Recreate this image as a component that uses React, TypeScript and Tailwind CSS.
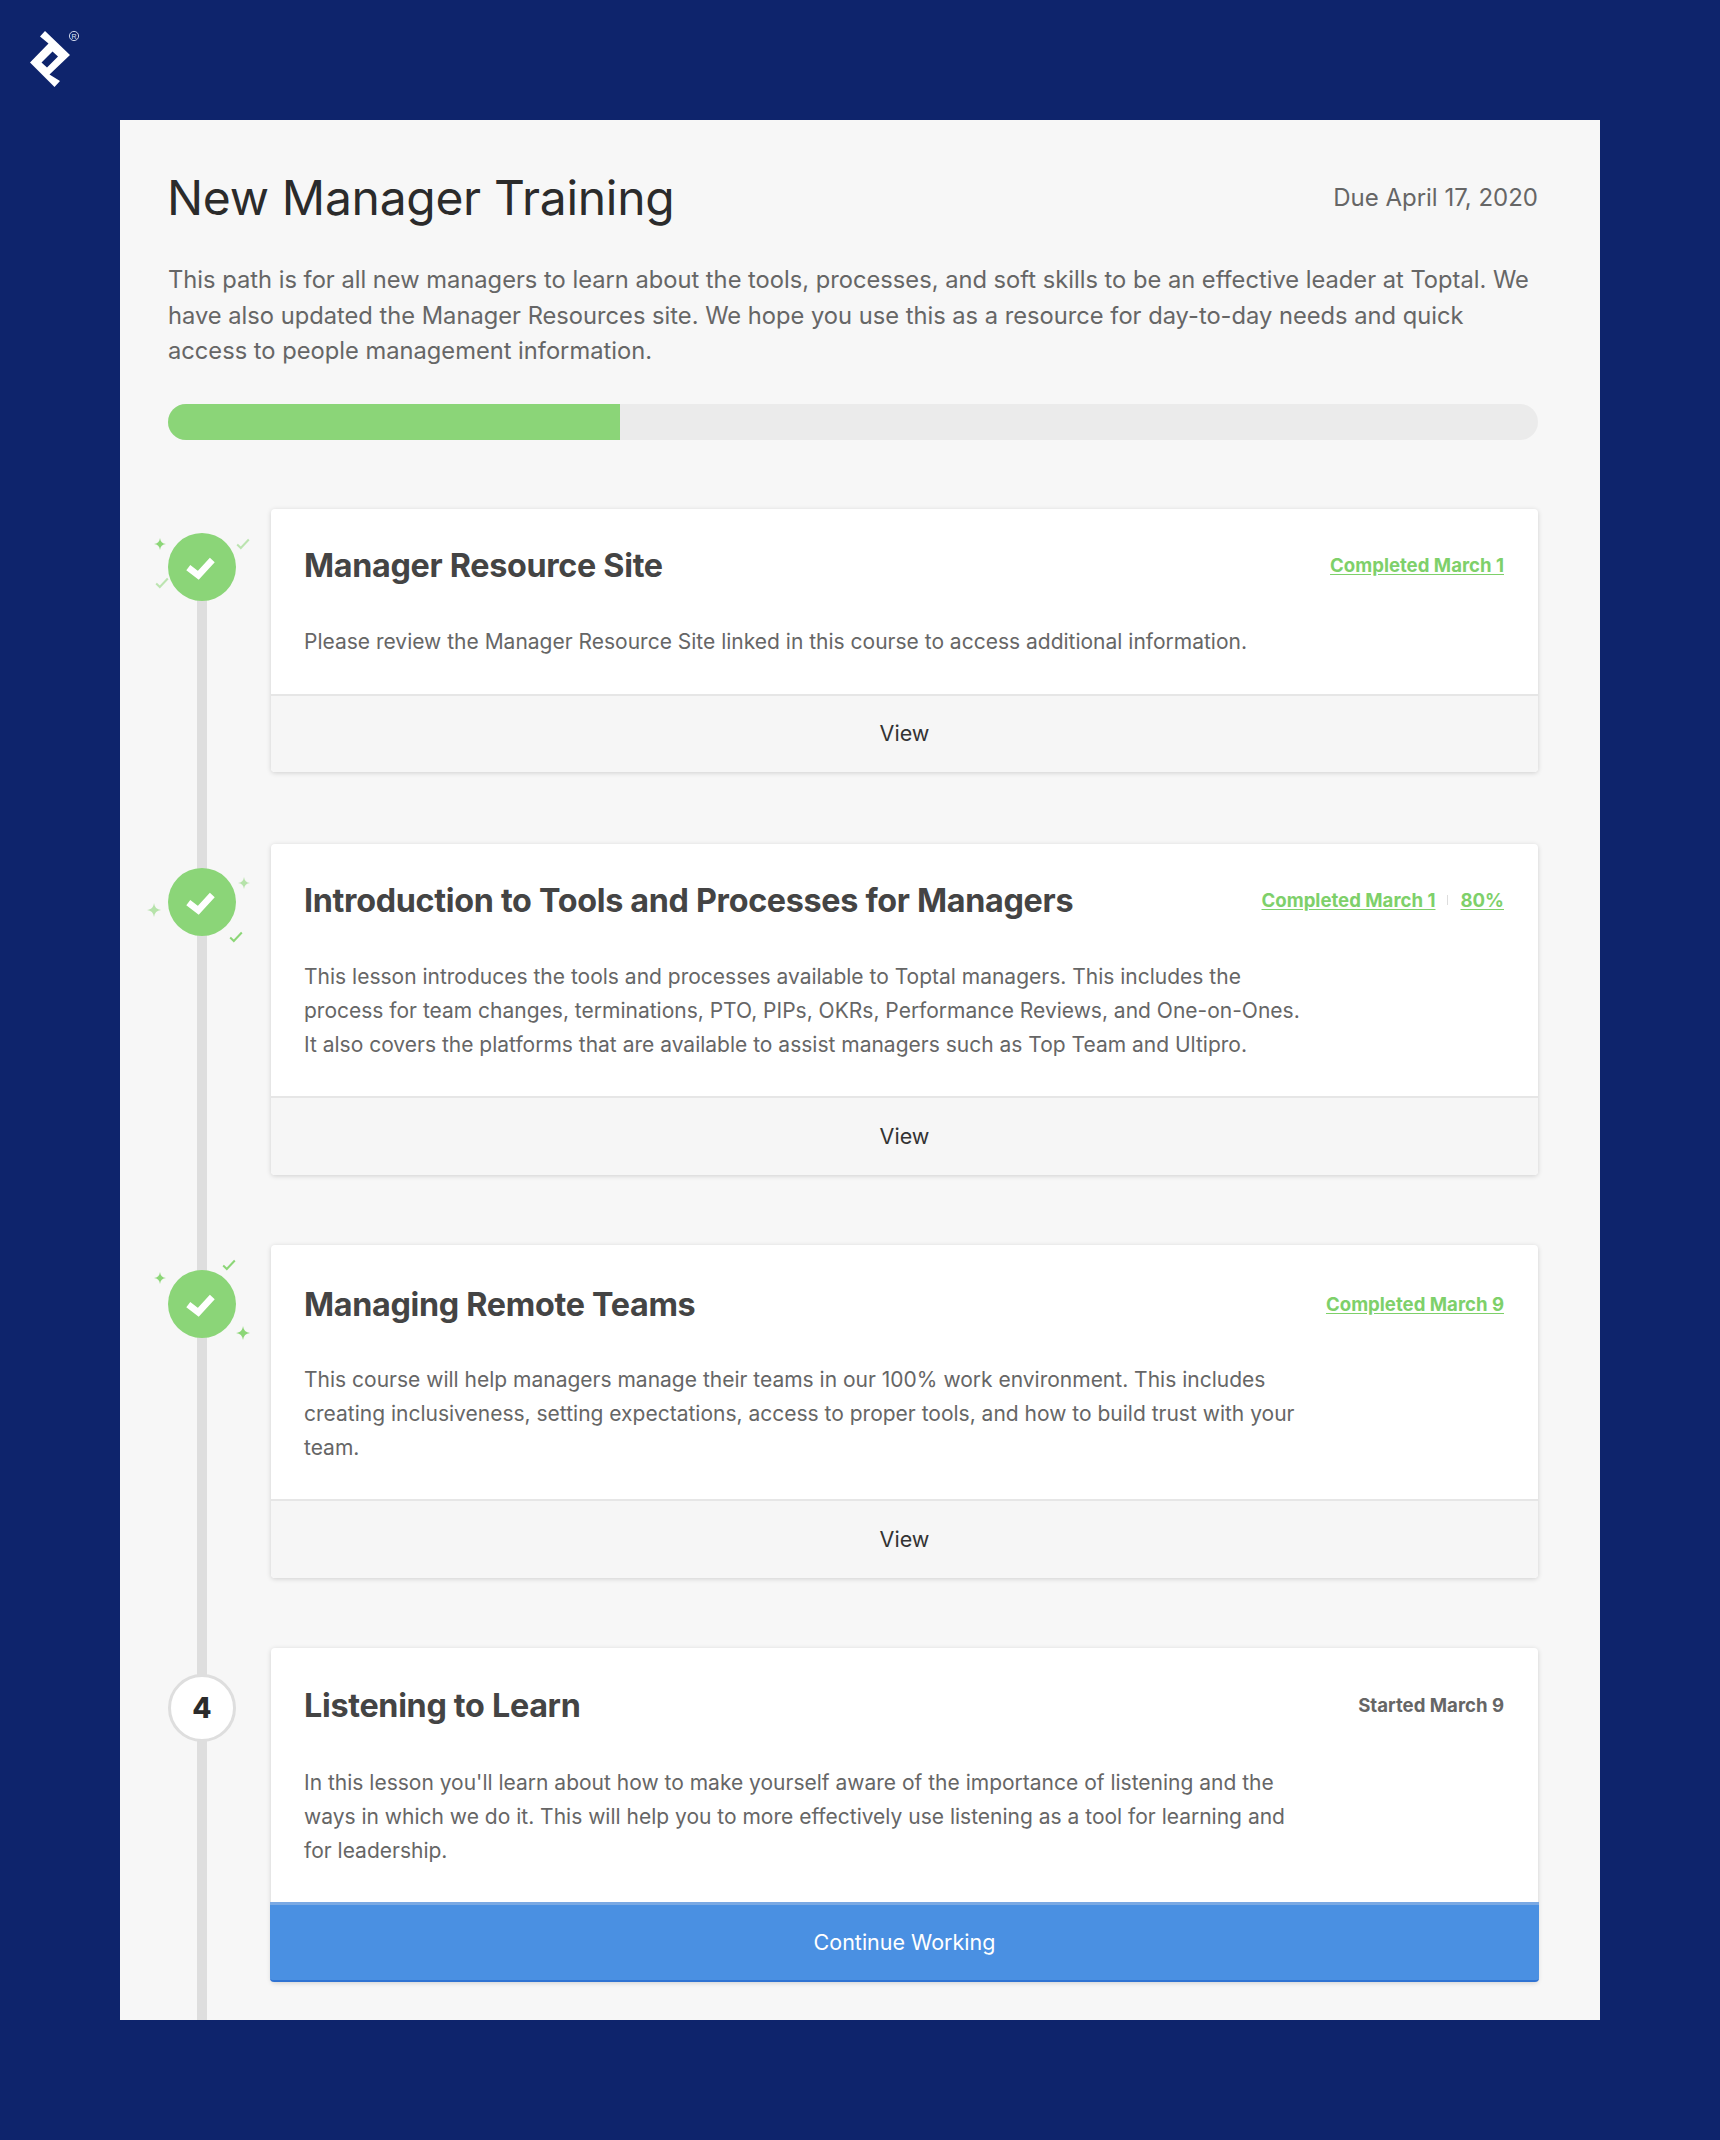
import React from "react";

const font = { fontFamily: '"Inter", "Liberation Sans", sans-serif' };

function Logo() {
  return (
    <svg width="64" height="70" viewBox="25 25 64 70" className="shrink-0">
      <path
        fillRule="evenodd"
        fill="#fff"
        d="M40 36.5L45 31L70 55L49.5 74.5L60 81L54.5 87L30 62.5L48.5 43.5ZM41.5 62.5L47 67.5L58 56.5L52.5 51.5Z"
      />
      <circle cx="74" cy="36" r="4.6" fill="none" stroke="#dfe5f7" strokeWidth="0.9" />
      <text x="74" y="38.6" textAnchor="middle" fontSize="7" fill="#dfe5f7" fontFamily="Liberation Sans, sans-serif">R</text>
    </svg>
  );
}

function Star({ x, y, s = 12, o = 1 }: { x: number; y: number; s?: number; o?: number }) {
  return (
    <svg className="absolute" style={{ left: x, top: y, opacity: o }} width={s} height={s} viewBox="0 0 12 12">
      <path d="M6 0C6.4 3.6 8.4 5.6 12 6C8.4 6.4 6.4 8.4 6 12C5.6 8.4 3.6 6.4 0 6C3.6 5.6 5.6 3.6 6 0Z" fill="#8cd677" />
    </svg>
  );
}

function Tick({ x, y, o = 1 }: { x: number; y: number; o?: number }) {
  return (
    <svg className="absolute" style={{ left: x, top: y, opacity: o }} width="14" height="12" viewBox="0 0 14 12">
      <path d="M1.2 6.5L4.8 10L12.8 1.5" fill="none" stroke="#8cd677" strokeWidth="2" />
    </svg>
  );
}

function Done({ deco }: { deco: React.ReactNode }) {
  return (
    <div className="relative w-[68px] h-[68px] rounded-full bg-[#8bd578] flex items-center justify-center">
      <svg width="30" height="24" viewBox="0 0 30 24" className="overflow-visible">
        <path d="M1.3 12.7L11.3 20.3L25.3 5" fill="none" stroke="#fff" strokeWidth="6.6" strokeLinejoin="miter" />
      </svg>
      {deco}
    </div>
  );
}

function Number4() {
  return (
    <div className="w-[68px] h-[68px] rounded-full bg-white border-[3px] border-[#dedede] flex items-center justify-center text-[28px] font-extrabold text-[#2b2b2b]">
      4
    </div>
  );
}

function Card({
  title,
  status,
  body,
  primary,
  action,
  mb,
  badge,
  top,
  badgeTop,
  gapB,
  gapT,
  foot = "h-[79px]",
}: {
  title: string;
  status: React.ReactNode;
  body: string[];
  primary?: boolean;
  action: string;
  mb: string;
  badge: React.ReactNode;
  top: string;
  badgeTop: string;
  gapB: string;
  gapT: string;
  foot?: string;
}) {
  return (
    <div className={`flex ${mb}`}>
      <div className={`w-[103px] shrink-0 ${badgeTop}`}>{badge}</div>
      <div className="w-[1267px] rounded-[4px] bg-white shadow-[0_1px_5px_rgba(0,0,0,0.16)]">
        <div className={`pl-[33px] pr-[34px] ${top} ${gapB}`}>
          <div className="flex items-center justify-between h-[40px]">
            <h2 className="text-[32.3px] leading-[40px] font-bold text-[#444] tracking-[-0.3px] whitespace-nowrap">{title}</h2>
            {status}
          </div>
          <div className={`${gapT} text-[21px] leading-[34px] text-[#666] whitespace-nowrap`}>
            {body.map((l) => (
              <div key={l}>{l}</div>
            ))}
          </div>
        </div>
        {primary ? (
          <div className="h-[80px] rounded-b-[4px] -mx-px bg-[#4a90e2] border-t-[3px] border-t-[#7aa9e4] border-b-2 border-b-[#2f73d3] flex items-center justify-center text-[21.5px] text-white">
            {action}
          </div>
        ) : (
          <div className={`${foot} rounded-b-[4px] bg-[#f6f6f6] border-t-2 border-t-[#e6e6e6] flex items-center justify-center text-[21.5px] text-[#333]`}>
            {action}
          </div>
        )}
      </div>
    </div>
  );
}

function Done1() {
  return <span className="text-[18.6px] font-bold text-[#7ed06a] underline underline-offset-2 whitespace-nowrap">Completed March 1</span>;
}

export default function App() {
  return (
    <div className="w-[1720px] h-[2140px] bg-[#0e246c] overflow-hidden" style={font}>
      <div className="h-[120px] pt-[25px] pl-[25px]">
        <Logo />
      </div>
      <div className="mx-[120px] h-[1900px] bg-[#f7f7f7] pl-[48px] pr-[62px] pt-[48px] relative overflow-hidden">
        <div className="flex items-center justify-between h-[60px]">
          <h1 className="text-[48px] leading-[60px] font-normal text-[#2b2b2b] tracking-[-0.3px] -ml-px">New Manager Training</h1>
          <div className="text-[24px] text-[#666]">Due April 17, 2020</div>
        </div>
        <div className="mt-[34px] text-[23.7px] leading-[35.5px] text-[#666] whitespace-nowrap">
          <div>This path is for all new managers to learn about the tools, processes, and soft skills to be an effective leader at Toptal. We</div>
          <div>have also updated the Manager Resources site. We hope you use this as a resource for day-to-day needs and quick</div>
          <div>access to people management information.</div>
        </div>
        <div className="mt-[35px] h-[36px] rounded-full bg-[#ebebeb] overflow-hidden">
          <div className="h-full w-[452px] bg-[#8bd578]" />
        </div>

        <div className="relative mt-[69px]">
          <div className="absolute left-[29px] top-[60px] bottom-[-200px] w-[10px] bg-[#dedede]" />
          <div className="relative">
            <Card
              mb="mb-[72px]"
              top="pt-[37px]"
              badgeTop="pt-[24px]"
              gapT="mt-[39px]"
              gapB="pb-[35px]"
              foot="h-[78px]"
              title="Manager Resource Site"
              status={<Done1 />}
              body={["Please review the Manager Resource Site linked in this course to access additional information."]}
              action="View"
              badge={
                <Done
                  deco={
                    <>
                      <Star x={-14} y={5} s={12} />
                      <Tick x={68} y={5} o={0.55} />
                      <Tick x={-13} y={44} o={0.55} />
                    </>
                  }
                />
              }
            />
            <Card
              mb="mb-[70px]"
              top="pt-[37px]"
              badgeTop="pt-[24px]"
              gapT="mt-[39px]"
              gapB="pb-[34px]"
              title="Introduction to Tools and Processes for Managers"
              status={
                <span className="flex items-center gap-[12px]">
                  <Done1 />
                  <span className="w-px h-[10px] bg-[#ddd]" />
                  <span className="text-[18.6px] font-bold text-[#7ed06a] underline underline-offset-2">80%</span>
                </span>
              }
              body={[
                "This lesson introduces the tools and processes available to Toptal managers. This includes the",
                "process for team changes, terminations, PTO, PIPs, OKRs, Performance Reviews, and One-on-Ones.",
                "It also covers the platforms that are available to assist managers such as Top Team and Ultipro.",
              ]}
              action="View"
              badge={
                <Done
                  deco={
                    <>
                      <Star x={-21} y={35} s={14} o={0.6} />
                      <Star x={70} y={9} s={12} o={0.6} />
                      <Tick x={61} y={63} />
                    </>
                  }
                />
              }
            />
            <Card
              mb="mb-[70px]"
              top="pt-[40px]"
              badgeTop="pt-[25px]"
              gapT="mt-[38px]"
              gapB="pb-[34px]"
              title="Managing Remote Teams"
              status={<span className="text-[18.6px] font-bold text-[#7ed06a] underline underline-offset-2 whitespace-nowrap">Completed March 9</span>}
              body={[
                "This course will help managers manage their teams in our 100% work environment. This includes",
                "creating inclusiveness, setting expectations, access to proper tools, and how to build trust with your",
                "team.",
              ]}
              action="View"
              badge={
                <Done
                  deco={
                    <>
                      <Star x={-14} y={2} s={12} />
                      <Tick x={54} y={-11} />
                      <Star x={68} y={56} s={14} />
                    </>
                  }
                />
              }
            />
            <Card
              mb=""
              top="pt-[38px]"
              badgeTop="pt-[26px]"
              gapT="mt-[40px]"
              gapB="pb-[34px]"
              title="Listening to Learn"
              status={<span className="text-[18.6px] font-bold text-[#666] whitespace-nowrap">Started March 9</span>}
              body={[
                "In this lesson you'll learn about how to make yourself aware of the importance of listening and the",
                "ways in which we do it. This will help you to more effectively use listening as a tool for learning and",
                "for leadership.",
              ]}
              primary
              action="Continue Working"
              badge={<Number4 />}
            />
          </div>
        </div>
      </div>
    </div>
  );
}
